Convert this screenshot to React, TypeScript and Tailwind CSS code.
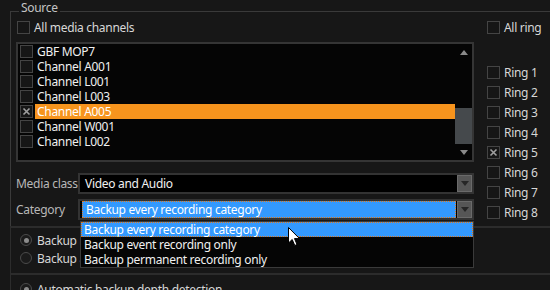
import React from "react";

function Check({ checked = false }: { checked?: boolean }) {
  return (
    <div className="w-[13px] h-[13px] shrink-0 border border-[#444] bg-[#161616] flex items-center justify-center">
      {checked && (
        <svg width="9" height="9" viewBox="0 0 9 9">
          <path d="M1.5 1.5 L7.5 7.5 M7.5 1.5 L1.5 7.5" stroke="#a0a0a0" strokeWidth="1.6" />
        </svg>
      )}
    </div>
  );
}

function Radio({ checked = false }: { checked?: boolean }) {
  return (
    <div className="w-[12px] h-[12px] shrink-0 rounded-full border border-[#4a4a4a] bg-[#1b1b1b] flex items-center justify-center">
      {checked && <div className="w-[5px] h-[5px] rounded-full bg-[#8c8c8c]" />}
    </div>
  );
}

function ArrowButton() {
  return (
    <div className="w-[15px] h-[17px] shrink-0 bg-[#565656] border border-[#6a6a6a] flex items-center justify-center">
      <svg width="8" height="5" viewBox="0 0 8 5">
        <path d="M0 0 L8 0 L4 5 Z" fill="#262626" />
      </svg>
    </div>
  );
}

const channels = [
  { name: "GBF MOP7", checked: false, sel: false },
  { name: "Channel A001", checked: false, sel: false },
  { name: "Channel L001", checked: false, sel: false },
  { name: "Channel L003", checked: false, sel: false },
  { name: "Channel A005", checked: true, sel: true },
  { name: "Channel W001", checked: false, sel: false },
  { name: "Channel L002", checked: false, sel: false },
];

const rings = ["Ring 1", "Ring 2", "Ring 3", "Ring 4", "Ring 5", "Ring 6", "Ring 7", "Ring 8"];

export default function App() {
  return (
    <div className="relative w-[550px] h-[290px] overflow-hidden bg-[#171717] text-[12px] leading-[15px] tracking-[-0.3px] font-['Noto_Sans',sans-serif] text-[#d6d6d6]">
      <fieldset className="ml-[10px] mt-[1px] h-[225px] border-0 border-t border-l border-[#3a3a3a] p-0 m-0">
        <legend className="ml-[8px] px-[2px] pb-[6px] leading-[14px] text-[#c4c4c4]">Source</legend>
        <div className="flex">
          {/* left column */}
          <div className="pl-[5px] w-[463px] flex flex-col">
            <div className="h-[13px] flex items-center ml-[1px]">
              <Check />
              <span className="ml-[4px] text-[#d8d8d8] whitespace-nowrap">All media channels</span>
            </div>
            {/* list */}
            <div className="mt-[8px] w-[458px] h-[120px] border-2 border-[#353535] bg-[#050505] flex">
              <div className="flex-1 flex flex-col">
                {channels.map((c) => (
                  <div key={c.name} className="h-[15px] flex items-center pl-[2px]">
                    <Check checked={c.checked} />
                    <div
                      className={
                        c.sel
                          ? "ml-[2px] flex-1 h-[15px] pl-[2px] bg-[#f7941d] text-white flex items-center whitespace-nowrap"
                          : "ml-[2px] flex-1 h-[15px] pl-[2px] text-[#f0f0f0] flex items-center whitespace-nowrap"
                      }
                    >
                      {c.name}
                    </div>
                  </div>
                ))}
              </div>
              <div className="w-[17px] flex flex-col">
                <div className="h-[16px] flex items-center justify-center">
                  <svg width="8" height="5" viewBox="0 0 8 5">
                    <path d="M0 5 L8 5 L4 0 Z" fill="#8a8a8a" />
                  </svg>
                </div>
                <div className="flex-1 flex flex-col justify-end">
                  <div className="h-[36px] bg-[#45494c]" />
                </div>
                <div className="h-[16px] flex items-center justify-center">
                  <svg width="8" height="5" viewBox="0 0 8 5">
                    <path d="M0 0 L8 0 L4 5 Z" fill="#8a8a8a" />
                  </svg>
                </div>
              </div>
            </div>
            {/* Media class */}
            <div className="mt-[11px] flex items-center">
              <span className="w-[62px] shrink-0 text-[#b8b8b8] whitespace-nowrap">Media class</span>
              <div className="w-[396px] h-[21px] border-2 border-[#333] bg-black flex items-center">
                <span className="flex-1 pl-[5px] text-[#f0f0f0] whitespace-nowrap">Video and Audio</span>
                <ArrowButton />
              </div>
            </div>
            {/* Category */}
            <div className="mt-[5px] flex items-center">
              <span className="w-[62px] shrink-0 text-[#b8b8b8] whitespace-nowrap">Category</span>
              <div className="w-[396px] h-[21px] border-2 border-[#333] bg-black flex items-center">
                <div className="ml-[2px] mr-[1px] flex-1 h-[17px] bg-[#3399ff] border border-dotted border-[#e0781a] pl-[3px] text-white flex items-center whitespace-nowrap">
                  Backup every recording category
                </div>
                <ArrowButton />
              </div>
            </div>
          </div>
          {/* right column */}
          <div className="ml-[13px] flex flex-col">
            <div className="h-[13px] flex items-center">
              <Check />
              <span className="ml-[4px] whitespace-nowrap">All ring</span>
            </div>
            <div className="mt-[32px] flex flex-col gap-[7px]">
              {rings.map((r) => (
                <div key={r} className="h-[13px] flex items-center">
                  <Check checked={r === "Ring 5"} />
                  <span className="ml-[4px] whitespace-nowrap">{r}</span>
                </div>
              ))}
            </div>
          </div>
        </div>
      </fieldset>

      {/* backup mode group */}
      <div className="ml-[10px] h-[47px] border-t-2 border-l border-[#2c2c2c] pt-[6px] pl-[9px] flex flex-col gap-[6px]">
        <div className="h-[12px] flex items-center">
          <Radio checked />
          <span className="ml-[5px] w-[44px] overflow-hidden whitespace-nowrap">Backup recordings of the selected channels</span>
        </div>
        <div className="h-[12px] flex items-center">
          <Radio />
          <span className="ml-[5px] w-[44px] overflow-hidden whitespace-nowrap">Backup all recordings</span>
        </div>
      </div>

      {/* depth group */}
      <div className="ml-[10px] h-[30px] border-t-2 border-l border-[#2c2c2c] pt-[8px] pl-[9px]">
        <div className="h-[12px] flex items-center">
          <Radio checked />
          <span className="ml-[5px] whitespace-nowrap">Automatic backup depth detection</span>
        </div>
      </div>

      {/* dropdown popup */}
      <div className="absolute left-[80px] top-[221px] w-[394px] h-[47px] border border-[#3a3a3a] bg-[#050505] flex flex-col">
        <div className="h-[15px] bg-[#3399ff] border border-dotted border-[#e0781a] pl-[2px] text-white flex items-center whitespace-nowrap">
          Backup every recording category
        </div>
        <div className="h-[15px] pl-[3px] text-[#f0f0f0] flex items-center whitespace-nowrap">Backup event recording only</div>
        <div className="h-[15px] pl-[3px] text-[#f0f0f0] flex items-center whitespace-nowrap">Backup permanent recording only</div>
      </div>

      {/* mouse cursor */}
      <svg className="absolute left-[288px] top-[227px]" width="13" height="20" viewBox="0 0 13 20">
        <path d="M0.5 0.5 L0.5 16 L4.2 12.5 L6.8 18.5 L9 17.5 L6.5 11.6 L11.5 11.6 Z" fill="white" stroke="black" strokeWidth="1" strokeLinejoin="round" />
      </svg>
    </div>
  );
}
